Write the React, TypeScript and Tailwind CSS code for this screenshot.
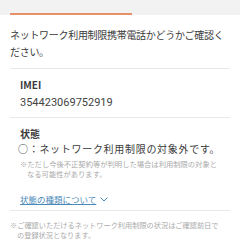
import React from "react";

export default function App() {
  const jp = { fontFamily: '"Noto Sans CJK JP", "Noto Sans", sans-serif' };
  return (
    <div className="w-[240px] h-[240px] overflow-hidden bg-white text-[#3a3a3a]" style={jp}>
      <div className="h-[15px] bg-[#f2f2f2] px-[10px] flex items-end">
        <div className="w-[122px] h-[2px] bg-[#e5916a]" />
      </div>
      <p className="px-[10px] pt-[11px] text-[10px] leading-[17px] tracking-[-0.3px] whitespace-nowrap">
        ネットワーク利用制限携帯電話かどうかご確認く
        <br />
        ださい。
      </p>
      <div className="mx-[10px] mt-[8px] border-t border-[#e8e8e8] pl-[10px] pt-[7px] pb-[5px]">
        <div className="text-[10px] leading-[18px] font-bold">IMEI</div>
        <div className="text-[11px] leading-[18px] text-[#444]" style={{ fontFamily: 'Roboto, "Noto Sans", sans-serif' }}>354423069752919</div>
      </div>
      <div className="mx-[10px] border-t border-[#e8e8e8] pl-[10px] pt-[8px]">
        <div className="text-[10px] leading-[16px] font-bold">状態</div>
        <div className="text-[10px] leading-[14px] tracking-[0.7px] -ml-[2px] whitespace-nowrap">○：ネットワーク利用制限の対象外です。</div>
        <div className="mt-[3px] text-[7.3px] leading-[10px] text-[#aaa] whitespace-nowrap">
          ※ただし今後不正契約等が判明した場合は利用制限の対象と
          <br />
          <span className="pl-[7px]">なる可能性があります。</span>
        </div>
        <div className="mt-[12px] pb-[3px] text-[8.5px] leading-[16px] text-[#4a8ab8] flex items-center">
          <span className="underline">状態の種類について</span>
          <svg className="ml-[4px]" width="8" height="5" viewBox="0 0 8 5" fill="none" stroke="#4a8ab8" strokeWidth="1">
            <path d="M0.5 0.5 L4 4 L7.5 0.5" />
          </svg>
        </div>
      </div>
      <div className="mx-[10px] border-t border-[#e8e8e8] pt-[9px] text-[7.2px] leading-[10px] text-[#aaa] whitespace-nowrap">
        ※ご確認いただけるネットワーク利用制限の状況はご確認前日で
        <br />
        <span className="pl-[7px]">の登録状況となります。</span>
      </div>
    </div>
  );
}
